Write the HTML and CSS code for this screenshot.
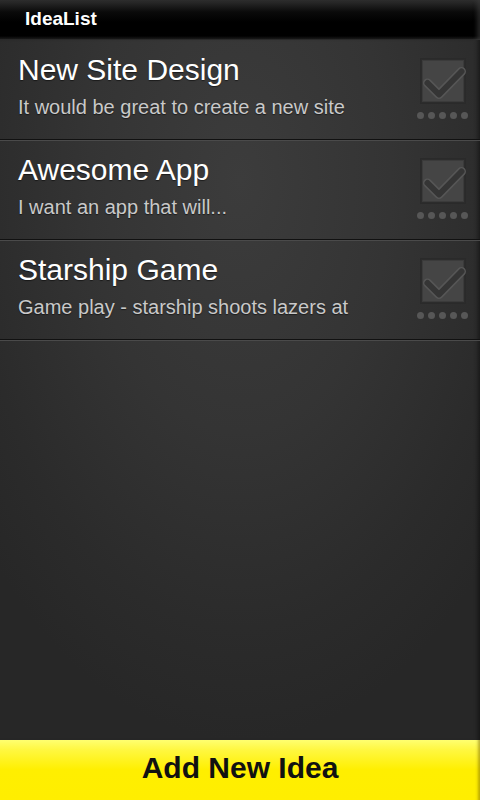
FILE: index.html
```html
<!DOCTYPE html>
<html>
<head>
<meta charset="utf-8">
<title>IdeaList</title>
<link rel="stylesheet" href="styles.css">
</head>
<body>
<div class="app">
  <header class="topbar"><h1 class="topbar-title">IdeaList</h1></header>
  <main class="list">
    <div class="row">
      <div class="row-text">
        <div class="row-title">New Site Design</div>
        <div class="row-sub">It would be great to create a new site</div>
      </div>
      <div class="row-check">
        <svg class="check" width="46" height="46" viewBox="0 0 46 46">
          <rect x="0.5" y="0.5" width="45" height="45" fill="#2c2c2c" stroke="#2a2a2a"/>
          <rect x="2.5" y="2.5" width="41" height="41" fill="#454545" stroke="#3b3b3b"/>
          <path d="M7.5 25 L19 36.5 L41.5 13.5" fill="none" stroke="#565656" stroke-width="9" stroke-linecap="round" stroke-linejoin="round"/>
          <path d="M7.5 25 L19 36.5 L41.5 13.5" fill="none" stroke="#353535" stroke-width="6" stroke-linecap="round" stroke-linejoin="round"/>
        </svg>
        <div class="dots"><span></span><span></span><span></span><span></span><span></span></div>
      </div>
    </div>
    <div class="row">
      <div class="row-text">
        <div class="row-title">Awesome App</div>
        <div class="row-sub">I want an app that will...</div>
      </div>
      <div class="row-check">
        <svg class="check" width="46" height="46" viewBox="0 0 46 46">
          <rect x="0.5" y="0.5" width="45" height="45" fill="#2c2c2c" stroke="#2a2a2a"/>
          <rect x="2.5" y="2.5" width="41" height="41" fill="#454545" stroke="#3b3b3b"/>
          <path d="M7.5 25 L19 36.5 L41.5 13.5" fill="none" stroke="#565656" stroke-width="9" stroke-linecap="round" stroke-linejoin="round"/>
          <path d="M7.5 25 L19 36.5 L41.5 13.5" fill="none" stroke="#353535" stroke-width="6" stroke-linecap="round" stroke-linejoin="round"/>
        </svg>
        <div class="dots"><span></span><span></span><span></span><span></span><span></span></div>
      </div>
    </div>
    <div class="row">
      <div class="row-text">
        <div class="row-title">Starship Game</div>
        <div class="row-sub">Game play - starship shoots lazers at</div>
      </div>
      <div class="row-check">
        <svg class="check" width="46" height="46" viewBox="0 0 46 46">
          <rect x="0.5" y="0.5" width="45" height="45" fill="#2c2c2c" stroke="#2a2a2a"/>
          <rect x="2.5" y="2.5" width="41" height="41" fill="#454545" stroke="#3b3b3b"/>
          <path d="M7.5 25 L19 36.5 L41.5 13.5" fill="none" stroke="#565656" stroke-width="9" stroke-linecap="round" stroke-linejoin="round"/>
          <path d="M7.5 25 L19 36.5 L41.5 13.5" fill="none" stroke="#353535" stroke-width="6" stroke-linecap="round" stroke-linejoin="round"/>
        </svg>
        <div class="dots"><span></span><span></span><span></span><span></span><span></span></div>
      </div>
    </div>
  </main>
  <button class="add-btn">Add New Idea</button>
</div>
</body>
</html>
```

FILE: styles.css
```css
* { box-sizing: border-box; }
html, body { margin: 0; padding: 0; background: #2b2b2b; }
body { font-family: "Liberation Sans", Arial, sans-serif; }

.app {
  width: 480px;
  height: 800px;
  display: flex;
  flex-direction: column;
  overflow: hidden;
}

.topbar {
  height: 40px;
  flex: none;
  background: linear-gradient(to bottom, #2e2e2e 0px, #0a0a0a 12px, #000 22px, #000 36px, #1a1a1a 39px, #3a3a3a 40px);
  padding: 0 0 2px 25px;
  box-shadow: inset -6px 0 4px -3px rgba(60,60,60,0.6);
}
.topbar-title {
  margin: 0;
  font-size: 19px;
  line-height: 38px;
  font-weight: bold;
  color: #fff;
}

.list {
  flex: 1;
  background:
    radial-gradient(ellipse 70% 80% at 50% 20%, #3c3c3c 0%, #343434 45%, #2b2b2b 80%, #272727 100%);
  box-shadow: inset -5px 0 4px -3px rgba(0,0,0,0.45);
}

.row {
  height: 100px;
  display: flex;
  justify-content: space-between;
  padding: 13px 0 0 18px;
  border-bottom: 1px solid #111;
  box-shadow: 0 1px 0 #4a4a4a;
}
.row-title {
  font-size: 30px;
  line-height: 34px;
  color: #fff;
  text-shadow: 0 1px 1px rgba(0,0,0,0.5);
}
.row-sub {
  margin-top: 8px;
  font-size: 20px;
  line-height: 24px;
  color: #c9c9c9;
  text-shadow: 0 1px 1px rgba(0,0,0,0.5);
}

.row-check {
  width: 60px;
  padding: 5px 0 0 0;
  display: flex;
  flex-direction: column;
  gap: 8px;
}
.check { display: block; }
.dots {
  display: flex;
  gap: 4px;
  margin-left: -3px;
}
.dots span {
  width: 7px;
  height: 7px;
  border-radius: 50%;
  background: #575757;
}

.add-btn {
  height: 60px;
  flex: none;
  width: 100%;
  border: 0;
  margin: 0;
  padding: 0 0 4px 0;
  font-family: "Liberation Sans", Arial, sans-serif;
  font-size: 30px;
  line-height: 56px;
  font-weight: bold;
  color: #111;
  background: linear-gradient(to bottom, #ffff70 0px, #fff740 10px, #ffef00 30px, #ffee00 60px);
  box-shadow: inset -5px 0 3px -3px rgba(120,100,0,0.5);
}
```
